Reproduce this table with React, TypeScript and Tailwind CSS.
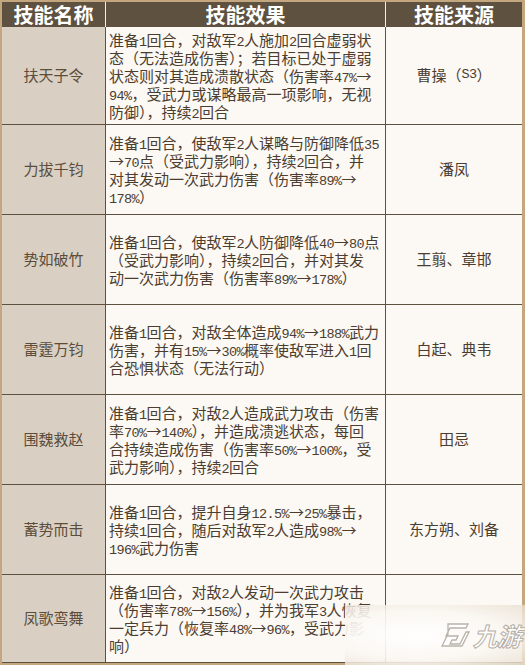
import React from "react";

type Row = { name: string; lines: string[]; source: string; h: string };

const rows: Row[] = [
  {
    name: "扶天子令",
    lines: [
      "准备1回合，对敌军2人施加2回合虚弱状",
      "态（无法造成伤害）；若目标已处于虚弱",
      "状态则对其造成溃散状态（伤害率47%→",
      "94%，受武力或谋略最高一项影响，无视",
      "防御），持续2回合",
    ],
    source: "曹操（S3）",
    h: "h-[98px]",
  },
  {
    name: "力拔千钧",
    lines: [
      "准备1回合，使敌军2人谋略与防御降低35",
      "→70点（受武力影响），持续2回合，并",
      "对其发动一次武力伤害（伤害率89%→",
      "178%）",
    ],
    source: "潘凤",
    h: "h-[90px]",
  },
  {
    name: "势如破竹",
    lines: [
      "准备1回合，使敌军2人防御降低40→80点",
      "（受武力影响），持续2回合，并对其发",
      "动一次武力伤害（伤害率89%→178%）",
    ],
    source: "王翦、章邯",
    h: "h-[90px]",
  },
  {
    name: "雷霆万钧",
    lines: [
      "准备1回合，对敌全体造成94%→188%武力",
      "伤害，并有15%→30%概率使敌军进入1回",
      "合恐惧状态（无法行动）",
    ],
    source: "白起、典韦",
    h: "h-[90px]",
  },
  {
    name: "围魏救赵",
    lines: [
      "准备1回合，对敌2人造成武力攻击（伤害",
      "率70%→140%），并造成溃逃状态，每回",
      "合持续造成伤害（伤害率50%→100%，受",
      "武力影响），持续2回合",
    ],
    source: "田忌",
    h: "h-[90px]",
  },
  {
    name: "蓄势而击",
    lines: [
      "准备1回合，提升自身12.5%→25%暴击，",
      "持续1回合，随后对敌军2人造成98%→",
      "196%武力伤害",
    ],
    source: "东方朔、刘备",
    h: "h-[90px]",
  },
  {
    name: "凤歌鸾舞",
    lines: [
      "准备1回合，对敌2人发动一次武力攻击",
      "（伤害率78%→156%），并为我军3人恢复",
      "一定兵力（恢复率48%→96%，受武力影",
      "响）",
    ],
    source: "",
    h: "h-[88px]",
  },
];

const font = "font-['Noto_Sans_CJK_SC',sans-serif]";

function Txt({ s }: { s: string }) {
  const parts = s.split(/([0-9.%A-Za-z]+)/);
  return (
    <>
      {parts.map((p, i) =>
        i % 2 === 1 ? (
          <span key={i} className="font-['Liberation_Mono',monospace] text-[13.5px] tracking-[-0.6px]">
            {p}
          </span>
        ) : (
          <React.Fragment key={i}>{p}</React.Fragment>
        )
      )}
    </>
  );
}

export default function App() {
  return (
    <div
      className={`relative w-[525px] h-[665px] overflow-hidden bg-[#c4a77e] pt-[2px] pl-[2px] ${font}`}
    >
      <div className="w-[520px] flex flex-col">
        {/* header */}
        <div className="flex h-[25px] bg-[#5f513f] text-white font-bold text-[20px] leading-[25px]">
          <div className="w-[104px] border-r border-[#f4eee6] text-center">技能名称</div>
          <div className="w-[280px] border-r border-[#f4eee6] text-center">技能效果</div>
          <div className="w-[136px] text-center">技能来源</div>
        </div>
        {rows.map((r, i) => (
          <div key={i} className={`flex ${r.h} border-b border-[#5f513f]`}>
            <div className="w-[104px] border-r border-[#5f513f] bg-[#d9d0c3] flex items-center justify-center text-[15px] text-[#5c4d3b]">
              {r.name}
            </div>
            <div className="w-[280px] border-r border-[#5f513f] bg-[#fcf8f4] flex flex-col justify-center pl-[3px] text-[15px] leading-[18px] text-[#4b3d2f]">
              {r.lines.map((l, j) => (
                <div key={j} className="whitespace-nowrap h-[18px]">
                  <Txt s={l} />
                </div>
              ))}
            </div>
            <div className="w-[136px] bg-[#fcf8f4] flex items-center justify-center text-[15px] text-[#4b3d2f]">
              <Txt s={r.source} />
            </div>
          </div>
        ))}
      </div>

      {/* watermark */}
      <div className="absolute left-[345px] top-[605px] w-[180px] h-[60px] bg-[radial-gradient(ellipse_at_40%_50%,rgba(255,255,255,0.96)_0%,rgba(251,248,243,0.9)_55%,rgba(232,222,207,0.78)_100%)] flex items-center justify-end pr-[4px] gap-[3px]">
        <svg width="32" height="26" viewBox="0 0 32 26" fill="none" stroke="#b8b2aa" strokeWidth="1.3">
          <path d="M10 2 H30 L28 6 H12 L8 14 H20 L18 18 H14 L12 22 H22 L28 10 H31 L24 24 H4 L10 12 Z" fill="#ffffff" />
        </svg>
        <span className="italic font-bold text-[25px] leading-none text-white [-webkit-text-stroke:1px_#b5afa7] tracking-[-1px]">
          九游
        </span>
      </div>
    </div>
  );
}
